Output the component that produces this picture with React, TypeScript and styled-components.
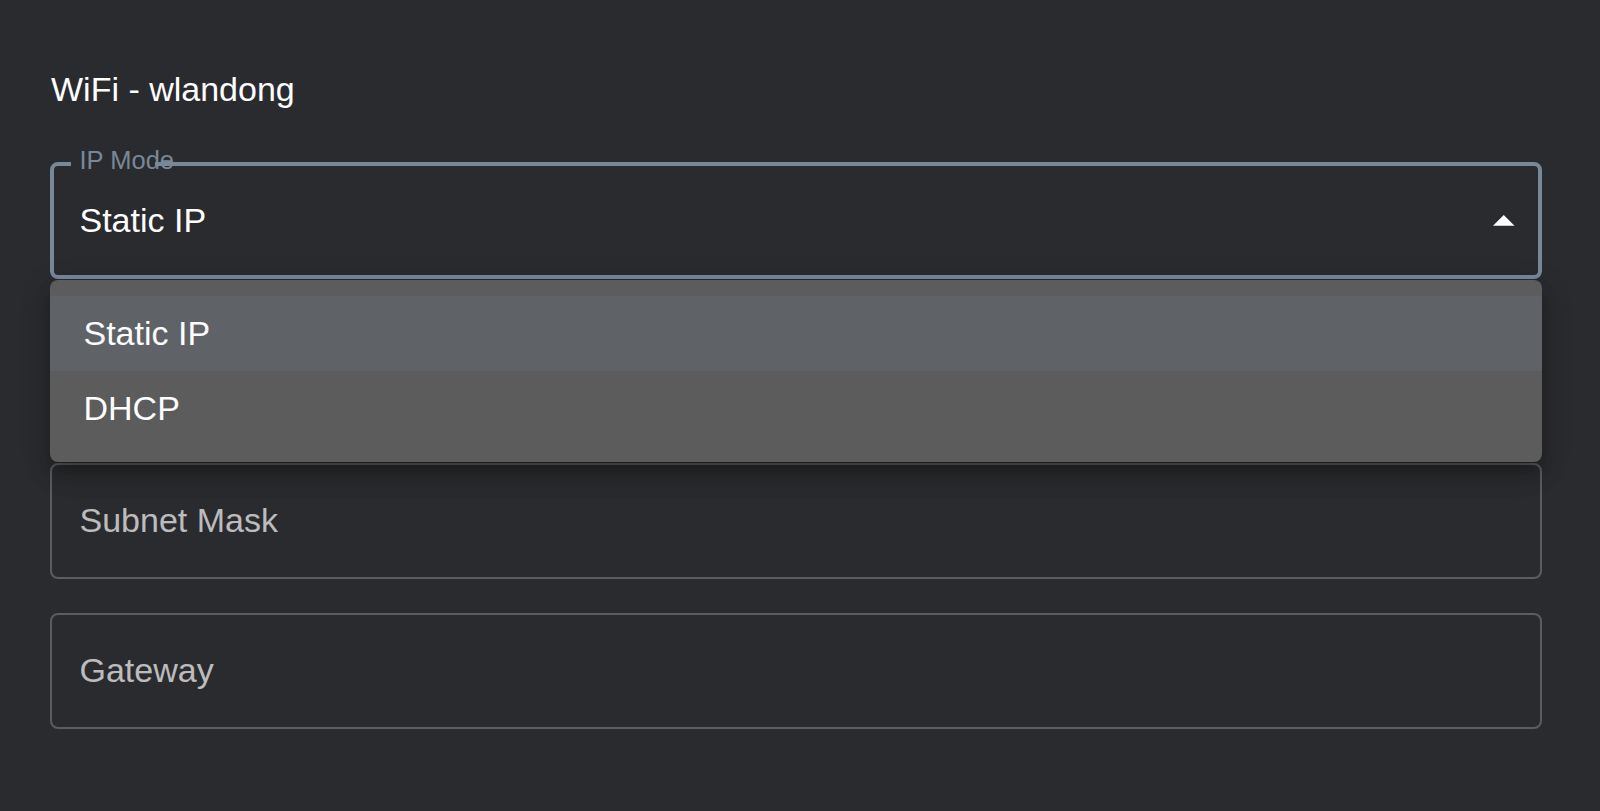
import React, {useState} from 'react';
import styled, {createGlobalStyle} from 'styled-components'

const GlobalStyle = createGlobalStyle`
  html, body {
    margin: 0;
    padding: 0;
    background: #2a2b2e;
    font-family: "Liberation Sans", Arial, Helvetica, sans-serif;
  }
`

const Page = styled.div`
  box-sizing: border-box;
  min-height: 100vh;
  padding: 72px 58px 0 50px;
`

const Title = styled.h2`
  margin: 0 0 56px 1px;
  font-size: 34px;
  line-height: 34px;
  font-weight: 400;
  color: #ffffff;
`

const Form = styled.div`
  display: flex;
  flex-direction: column;
  gap: 34px;
`

const SelectWrap = styled.div`
  position: relative;
  z-index: 2;
`

const FieldBox = styled('div')<{ $focused?: boolean }>`
  position: relative;
  box-sizing: border-box;
  height: ${({$focused}) => ($focused ? '117px' : '116px')};
  display: flex;
  align-items: center;
  justify-content: space-between;
  border: ${({$focused}) => ($focused ? '4px solid #778899' : '2px solid rgba(255, 255, 255, 0.23)')};
  border-radius: 8px;
  padding: 0 23.5px 2px ${({$focused}) => ($focused ? '25.5px' : '27.5px')};
  cursor: ${({$focused}) => ($focused ? 'pointer' : 'text')};
`

const FieldText = styled('span')<{ $placeholder?: boolean }>`
  font-size: 34px;
  line-height: 34px;
  color: ${({$placeholder}) => ($placeholder ? 'rgba(255, 255, 255, 0.7)' : '#ffffff')};
`

const Notch = styled.span`
  position: absolute;
  top: -4px;
  left: 17px;
  width: 84px;
  height: 4px;
  background: #2a2b2e;
`

const FloatLabel = styled.label`
  position: absolute;
  top: -18px;
  left: 25.5px;
  font-size: 25.5px;
  line-height: 25.5px;
  color: #778899;
`

const Arrow = styled.svg`
  width: 21.5px;
  height: 10.75px;
  margin-top: 2px;
  fill: #ffffff;
`

const Menu = styled.ul`
  position: absolute;
  top: calc(100% + 1px);
  left: 0;
  right: 0;
  margin: 0;
  padding: 16px 0;
  list-style: none;
  background: #5c5c5c;
  border-radius: 8px;
  box-shadow: 0 10px 10px -6px rgba(0, 0, 0, 0.2),
  0 16px 20px 2px rgba(0, 0, 0, 0.14),
  0 6px 28px 4px rgba(0, 0, 0, 0.12);
`

const MenuItem = styled('li')<{ selected: boolean }>`
  box-sizing: border-box;
  height: 75px;
  display: flex;
  align-items: center;
  padding: 0 0 2px 33.5px;
  font-size: 34px;
  line-height: 34px;
  color: #ffffff;
  background: ${({selected}) => (selected ? '#5f6367' : 'transparent')};
  cursor: pointer;
`

const modes = ['Static IP', 'DHCP']
const fields = ['IP Address', 'Subnet Mask', 'Gateway']

const App: React.FC = () => {
    const [mode, setMode] = useState('Static IP')

    return (
        <Page>
            <GlobalStyle/>
            <Title>WiFi - wlandong</Title>
            <Form>
                <SelectWrap>
                    <FieldBox $focused>
                        <Notch/>
                        <FloatLabel>IP Mode</FloatLabel>
                        <FieldText>{mode}</FieldText>
                        <Arrow viewBox="0 0 10 5">
                            <path d="M0 5L5 0l5 5z"/>
                        </Arrow>
                    </FieldBox>
                    <Menu>
                        {modes.map(m => (
                            <MenuItem key={m} selected={m === mode} onClick={() => setMode(m)}>
                                {m}
                            </MenuItem>
                        ))}
                    </Menu>
                </SelectWrap>
                {fields.map(f => (
                    <FieldBox key={f}>
                        <FieldText $placeholder>{f}</FieldText>
                    </FieldBox>
                ))}
            </Form>
        </Page>
    );
};

export default App;
